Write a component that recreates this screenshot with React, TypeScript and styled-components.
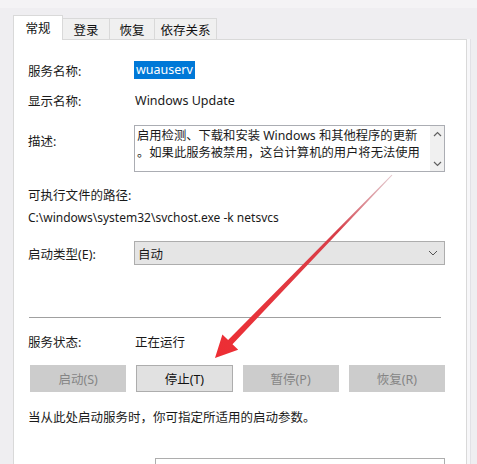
import React from "react";
import styled, { createGlobalStyle } from "styled-components";

const GlobalStyle = createGlobalStyle`
  html, body {
    margin: 0;
    padding: 0;
    background: #f0f0f0;
  }
  body {
    font-family: "Noto Sans", "Noto Sans CJK SC", sans-serif;
    font-size: 12.5px;
    color: #1a1a1a;
  }
`;

const Window = styled.div`
  position: relative;
  width: 477px;
  height: 464px;
  overflow: hidden;
  padding: 15px 0 0 13px;
  box-sizing: border-box;
  background: linear-gradient(#f4f3f5 0, #f4f3f5 8px, #efeef1 8px);
`;

const TabStrip = styled.div`
  display: flex;
  align-items: flex-end;
  height: 25px;
  position: relative;
  z-index: 1;
`;

const Tab = styled.div<{ $active?: boolean; $w: number }>`
  width: ${(p) => p.$w}px;
  height: ${(p) => (p.$active ? 25 : 22)}px;
  box-sizing: border-box;
  display: flex;
  align-items: center;
  justify-content: center;
  border: 1px solid #d9d9d9;
  border-left: ${(p) => (p.$active ? "1px solid #d9d9d9" : "none")};
  border-bottom: ${(p) => (p.$active ? "none" : "1px solid #d9d9d9")};
  background: ${(p) => (p.$active ? "#ffffff" : "#f0f0f0")};
  color: #111;
  padding-bottom: ${(p) => (p.$active ? 2 : 0)}px;
`;

const Panel = styled.div`
  width: 454px;
  height: 460px;
  box-sizing: border-box;
  margin-top: -1px;
  border: 1px solid #d9d9d9;
  background: #ffffff;
  padding: 0 21px 0 14px;
  box-shadow: 3px 0 0 #f7f7f9, 4px 0 0 #e2e1e6;
`;

const Row = styled.div<{ $top: number }>`
  display: grid;
  grid-template-columns: 107px 1fr;
  align-items: center;
  height: 20px;
  margin-top: ${(p) => p.$top}px;
  white-space: nowrap;
`;

const Label = styled.span`
  color: #1a1a1a;
`;

const Selected = styled.span`
  justify-self: start;
  background: #0078d7;
  color: #ffffff;
  padding: 0 2px 1px;
  margin-left: -1px;
  line-height: 17px;
`;

const DescRow = styled.div`
  display: grid;
  grid-template-columns: 106px 1fr;
  margin-top: 15px;
`;

const DescLabel = styled.span`
  padding-top: 6px;
`;

const TextBox = styled.div`
  height: 47px;
  box-sizing: border-box;
  border: 1px solid #abadb3;
  display: flex;
`;

const TextBody = styled.div`
  flex: 1;
  padding: 1px 0 0 2px;
  font-size: 12.3px;
  line-height: 17px;
  white-space: nowrap;
  overflow: hidden;
`;

const ScrollTrack = styled.div`
  width: 14px;
  background: #f0f0f0;
  display: flex;
  flex-direction: column;
  justify-content: space-between;
  align-items: center;
  padding: 5px 0 4px;
`;

const PlainLine = styled.div<{ $top: number; $size?: number }>`
  height: 20px;
  line-height: 20px;
  margin-top: ${(p) => p.$top}px;
  font-size: ${(p) => p.$size ?? 12.5}px;
  white-space: nowrap;
`;

const ComboRow = styled.div`
  display: grid;
  grid-template-columns: 106px 1fr;
  align-items: center;
  margin-top: 13px;
`;

const Combo = styled.div`
  height: 24px;
  box-sizing: border-box;
  border: 1px solid #adadad;
  background: #e5e5e5;
  display: flex;
  align-items: center;
  justify-content: space-between;
  padding: 0 6px 0 3px;
`;

const Separator = styled.div`
  height: 1px;
  background: #a0a0a0;
  margin: 52px 4px 0 1px;
`;

const ButtonRow = styled.div`
  display: grid;
  grid-template-columns: repeat(4, 1fr);
  gap: 10px;
  margin: 14px 0 0 2px;
`;

const Button = styled.div<{ $disabled?: boolean }>`
  height: 27px;
  box-sizing: border-box;
  display: flex;
  align-items: center;
  justify-content: center;
  border: 1px solid ${(p) => (p.$disabled ? "#cccccc" : "#adadad")};
  background: ${(p) => (p.$disabled ? "#cccccc" : "#e1e1e1")};
  color: ${(p) => (p.$disabled ? "#858585" : "#111")};
`;

const ParamBox = styled.div`
  height: 30px;
  margin: 30px 0 0 127px;
  border: 1px solid #adadad;
  background: #fff;
`;

const ArrowLayer = styled.svg`
  position: absolute;
  left: 0;
  top: 0;
  pointer-events: none;
`;

const Chevron = ({ up }: { up?: boolean }) => (
  <svg width="9" height="6" viewBox="0 0 9 6">
    <path
      d={up ? "M1 5 L4.5 1.5 L8 5" : "M1 1 L4.5 4.5 L8 1"}
      fill="none"
      stroke="#606060"
      strokeWidth="1.2"
    />
  </svg>
);

export default function App() {
  return (
    <>
      <GlobalStyle />
      <Window>
        <TabStrip>
          <Tab $active $w={50}>常规</Tab>
          <Tab $w={47}>登录</Tab>
          <Tab $w={45}>恢复</Tab>
          <Tab $w={62}>依存关系</Tab>
        </TabStrip>
        <Panel>
          <Row $top={20}>
            <Label>服务名称:</Label>
            <Selected>wuauserv</Selected>
          </Row>
          <Row $top={10}>
            <Label>显示名称:</Label>
            <span>Windows Update</span>
          </Row>
          <DescRow>
            <DescLabel>描述:</DescLabel>
            <TextBox>
              <TextBody>
                启用检测、下载和安装 Windows 和其他程序的更新
                <br />
                。如果此服务被禁用，这台计算机的用户将无法使用
              </TextBody>
              <ScrollTrack>
                <Chevron up />
                <Chevron />
              </ScrollTrack>
            </TextBox>
          </DescRow>
          <PlainLine $top={14}>可执行文件的路径:</PlainLine>
          <PlainLine $top={2} $size={12}>C:\windows\system32\svchost.exe -k netsvcs</PlainLine>
          <ComboRow>
            <Label>启动类型(E):</Label>
            <Combo>
              <span>自动</span>
              <svg width="10" height="6" viewBox="0 0 10 6">
                <path d="M1 1 L5 5 L9 1" fill="none" stroke="#555" strokeWidth="1" />
              </svg>
            </Combo>
          </ComboRow>
          <Separator />
          <Row $top={13}>
            <Label>服务状态:</Label>
            <span>正在运行</span>
          </Row>
          <ButtonRow>
            <Button $disabled>启动(S)</Button>
            <Button>停止(T)</Button>
            <Button $disabled>暂停(P)</Button>
            <Button $disabled>恢复(R)</Button>
          </ButtonRow>
          <PlainLine $top={16}>当从此处启动服务时，你可指定所适用的启动参数。</PlainLine>
          <ParamBox />
        </Panel>
        <ArrowLayer width="477" height="464" viewBox="0 0 477 464">
          <defs>
            <linearGradient id="arrowFade" x1="392" y1="175" x2="215" y2="358" gradientUnits="userSpaceOnUse">
              <stop offset="0" stopColor="#c8909a" stopOpacity="0.5" />
              <stop offset="0.3" stopColor="#d8404a" />
              <stop offset="1" stopColor="#ee2d33" />
            </linearGradient>
          </defs>
          <polygon
            points="392.4,175.3 232.5,344.3 238.2,349.8 215,358 222.4,334.6 228.1,340.1 391.6,174.7"
            fill="url(#arrowFade)"
          />
        </ArrowLayer>
      </Window>
    </>
  );
}
